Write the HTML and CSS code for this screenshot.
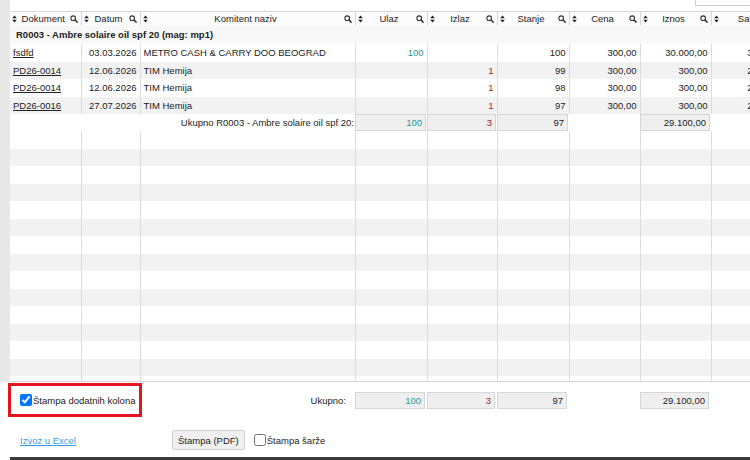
FILE: index.html
```html
<!DOCTYPE html>
<html lang="en">
<head>
    <meta charset="UTF-8">
    <title>Kartica artikla</title>
    <link rel="stylesheet" href="styles.css">
</head>
<body>
    <div class="main">
        <div class="panel">
            <div class="topbar"><div class="search-box"></div></div>
            <table class="grid">
                <colgroup>
                    <col class="c-dok"><col class="c-dat"><col class="c-kom"><col class="c-ulaz"><col class="c-izlaz">
                    <col class="c-stanje"><col class="c-cena"><col class="c-iznos"><col class="c-sa">
                </colgroup>
                <thead>
                    <tr>
                        <th><div class="hd"><i class="sort"></i><span>Dokument</span><i class="find"></i></div></th>
                        <th><div class="hd"><i class="sort"></i><span>Datum</span><i class="find"></i></div></th>
                        <th><div class="hd"><i class="sort"></i><span>Komitent naziv</span><i class="find"></i></div></th>
                        <th><div class="hd"><i class="sort"></i><span>Ulaz</span><i class="find"></i></div></th>
                        <th><div class="hd"><i class="sort"></i><span>Izlaz</span><i class="find"></i></div></th>
                        <th><div class="hd"><i class="sort"></i><span>Stanje</span><i class="find"></i></div></th>
                        <th><div class="hd"><i class="sort"></i><span>Cena</span><i class="find"></i></div></th>
                        <th><div class="hd"><i class="sort"></i><span>Iznos</span><i class="find"></i></div></th>
                        <th><div class="hd"><i class="sort"></i><span>Saldo</span><i class="find"></i></div></th>
                    </tr>
                </thead>
                <tbody>
                    <tr class="group"><td colspan="9">R0003 - Ambre solaire oil spf 20 (mag: mp1)</td></tr>
                    <tr class="row">
                        <td><a href="#">fsdfd</a></td><td class="r">03.03.2026</td><td>METRO CASH &amp; CARRY DOO BEOGRAD</td>
                        <td class="r in">100</td><td class="r out"></td><td class="r">100</td><td class="r">300,00</td><td class="r">30.000,00</td><td class="r">30.000,00</td>
                    </tr>
                    <tr class="row">
                        <td><a href="#">PD26-0014</a></td><td class="r">12.06.2026</td><td>TIM Hemija</td>
                        <td class="r in"></td><td class="r out">1</td><td class="r">99</td><td class="r">300,00</td><td class="r">300,00</td><td class="r">29.700,00</td>
                    </tr>
                    <tr class="row">
                        <td><a href="#">PD26-0014</a></td><td class="r">12.06.2026</td><td>TIM Hemija</td>
                        <td class="r in"></td><td class="r out">1</td><td class="r">98</td><td class="r">300,00</td><td class="r">300,00</td><td class="r">29.400,00</td>
                    </tr>
                    <tr class="row">
                        <td><a href="#">PD26-0016</a></td><td class="r">27.07.2026</td><td>TIM Hemija</td>
                        <td class="r in"></td><td class="r out">1</td><td class="r">97</td><td class="r">300,00</td><td class="r">300,00</td><td class="r">29.100,00</td>
                    </tr>
                    <tr class="sum">
                        <td colspan="3" class="r label">Ukupno R0003 - Ambre solaire oil spf 20:</td>
                        <td><div class="box in">100</div></td><td><div class="box out">3</div></td><td><div class="box">97</div></td>
                        <td></td><td><div class="box">29.100,00</div></td><td></td>
                    </tr>
                    <tr class="empty"><td></td><td></td><td></td><td></td><td></td><td></td><td></td><td></td><td></td></tr>
                    <tr class="empty"><td></td><td></td><td></td><td></td><td></td><td></td><td></td><td></td><td></td></tr>
                    <tr class="empty"><td></td><td></td><td></td><td></td><td></td><td></td><td></td><td></td><td></td></tr>
                    <tr class="empty"><td></td><td></td><td></td><td></td><td></td><td></td><td></td><td></td><td></td></tr>
                    <tr class="empty"><td></td><td></td><td></td><td></td><td></td><td></td><td></td><td></td><td></td></tr>
                    <tr class="empty"><td></td><td></td><td></td><td></td><td></td><td></td><td></td><td></td><td></td></tr>
                    <tr class="empty"><td></td><td></td><td></td><td></td><td></td><td></td><td></td><td></td><td></td></tr>
                    <tr class="empty"><td></td><td></td><td></td><td></td><td></td><td></td><td></td><td></td><td></td></tr>
                    <tr class="empty"><td></td><td></td><td></td><td></td><td></td><td></td><td></td><td></td><td></td></tr>
                    <tr class="empty"><td></td><td></td><td></td><td></td><td></td><td></td><td></td><td></td><td></td></tr>
                    <tr class="empty"><td></td><td></td><td></td><td></td><td></td><td></td><td></td><td></td><td></td></tr>
                    <tr class="empty"><td></td><td></td><td></td><td></td><td></td><td></td><td></td><td></td><td></td></tr>
                    <tr class="empty"><td></td><td></td><td></td><td></td><td></td><td></td><td></td><td></td><td></td></tr>
                    <tr class="empty"><td></td><td></td><td></td><td></td><td></td><td></td><td></td><td></td><td></td></tr>
                    <tr class="empty"><td></td><td></td><td></td><td></td><td></td><td></td><td></td><td></td><td></td></tr>
                </tbody>
            </table>
        </div>
    </div>

    <div class="footer">
        <div class="totals">
            <div class="totals-left">
                <label class="print-cols"><input type="checkbox" checked>Štampa dodatnih kolona</label>
                <span class="totals-label">Ukupno:</span>
            </div>
            <div class="box in">100</div>
            <div class="box out">3</div>
            <div class="box">97</div>
            <div></div>
            <div class="box">29.100,00</div>
        </div>
        <div class="actions">
            <a href="#" class="excel">Izvoz u Excel</a>
            <button class="btn">Štampa (PDF)</button>
            <label class="print-lots"><input type="checkbox">Štampa šarže</label>
        </div>
    </div>
    <div class="bottom-line"></div>
</body>
</html>
```

FILE: styles.css
```css
body {
    margin: 0;
    width: 750px;
    height: 460px;
    overflow: hidden;
    font-family: "Liberation Sans", Arial, sans-serif;
    font-size: 9.5px;
    color: #222;
    background-color: #fff;
}

.main {
    padding-left: 10px;
    background-color: #e8e8e8;
}

.panel {
    height: 381px;
    overflow: hidden;
    background-color: #fff;
    border-bottom: 1px solid #d4d4d4;
}

.topbar {
    height: 11px;
    display: flex;
    justify-content: flex-end;
}

.search-box {
    width: 54px;
    height: 5px;
    border: 1px solid #d0d0d0;
    border-top: none;
    margin-right: -1px;
}

.grid {
    table-layout: fixed;
    width: 783px;
    border-collapse: collapse;
}

.c-dok { width: 71px; }
.c-dat { width: 59px; }
.c-kom { width: 215px; }
.c-ulaz { width: 72px; }
.c-izlaz { width: 70px; }
.c-stanje { width: 72px; }
.c-cena { width: 71px; }
.c-iznos { width: 71px; }
.c-sa { width: 82px; }

.grid th {
    height: 13px;
    padding: 0;
    font-weight: normal;
    font-size: 9.5px;
    border-top: 1px solid #d6d6d6;
    border-right: 1px solid #d6d6d6;
    background-color: #fcfcfc;
}

.hd {
    display: flex;
    align-items: center;
    padding: 0 3px 0 2px;
}

.hd span {
    flex: 1;
    text-align: center;
    white-space: nowrap;
    overflow: hidden;
}

.sort {
    width: 5px;
    height: 8px;
    background: url("data:image/svg+xml;utf8,<svg xmlns='http://www.w3.org/2000/svg' width='5' height='8' viewBox='0 0 5 8'><path d='M2.5 0.5L4.8 3.3H0.2z M2.5 7.5L0.2 4.7H4.8z' fill='%23222'/></svg>") no-repeat;
}

.find {
    width: 8px;
    height: 8px;
    background: url("data:image/svg+xml;utf8,<svg xmlns='http://www.w3.org/2000/svg' width='8' height='8' viewBox='0 0 8 8'><circle cx='3.2' cy='3.2' r='2.3' fill='none' stroke='%23333' stroke-width='1.1'/><path d='M4.9 4.9L7.6 7.6' stroke='%23333' stroke-width='1.5'/></svg>") no-repeat;
}

.grid td {
    padding: 0 3px;
    white-space: nowrap;
    overflow: hidden;
}

.group td {
    height: 19px;
    padding-left: 6px;
    font-weight: bold;
    background-color: #f8f8f8;
}

.row td, .empty td {
    height: 17.5px;
    border-right: 1px solid #dcdcdc;
}

.row:nth-child(odd) td {
    background-color: #f2f2f2;
}

.empty:nth-child(even) td {
    background-color: #f2f2f2;
}

.row a {
    color: #222;
}

.r {
    text-align: right;
}

.in { color: #1a9a9a; }
.out { color: #a5222c; }

.sum td {
    height: 17px;
    padding: 0 1px 0 0;
}

.sum .label {
    padding-right: 1px;
}

.box {
    height: 15px;
    line-height: 15px;
    padding: 0 3px;
    text-align: right;
    background-color: #efefef;
    border: 1px solid #d6d6d6;
}

.footer {
    padding-top: 1px;
}

.totals {
    display: grid;
    grid-template-columns: 355px 72px 70px 72px 71px 71px;
    align-items: center;
    height: 34px;
}

.totals .box {
    margin-right: 2px;
}

.totals-left {
    display: flex;
    align-items: center;
    justify-content: space-between;
}

.print-cols {
    display: flex;
    align-items: center;
    box-sizing: border-box;
    width: 134px;
    height: 34px;
    margin-left: 8px;
    padding-left: 9px;
    border: 3px solid #e3151f;
    white-space: nowrap;
}

.print-cols input, .print-lots input {
    width: 12px;
    height: 12px;
    margin: 0 1px 0 0;
}

.totals-label {
    padding-right: 9px;
}

.actions {
    display: flex;
    align-items: center;
    height: 20px;
    margin-top: 13px;
    padding-left: 20px;
}

.excel {
    color: #3a9be0;
    width: 152px;
}

.btn {
    height: 20px;
    padding: 0 5px;
    font-family: "Liberation Sans", Arial, sans-serif;
    font-size: 9.5px;
    color: #222;
    background-color: #f0f0f0;
    border: 1px solid #cfcfcf;
    border-radius: 2px;
}

.print-lots {
    display: flex;
    align-items: center;
    margin-left: 9px;
}

.bottom-line {
    margin: 7px 0 0 10px;
    height: 3px;
    background-color: #3a3a3a;
}
```
